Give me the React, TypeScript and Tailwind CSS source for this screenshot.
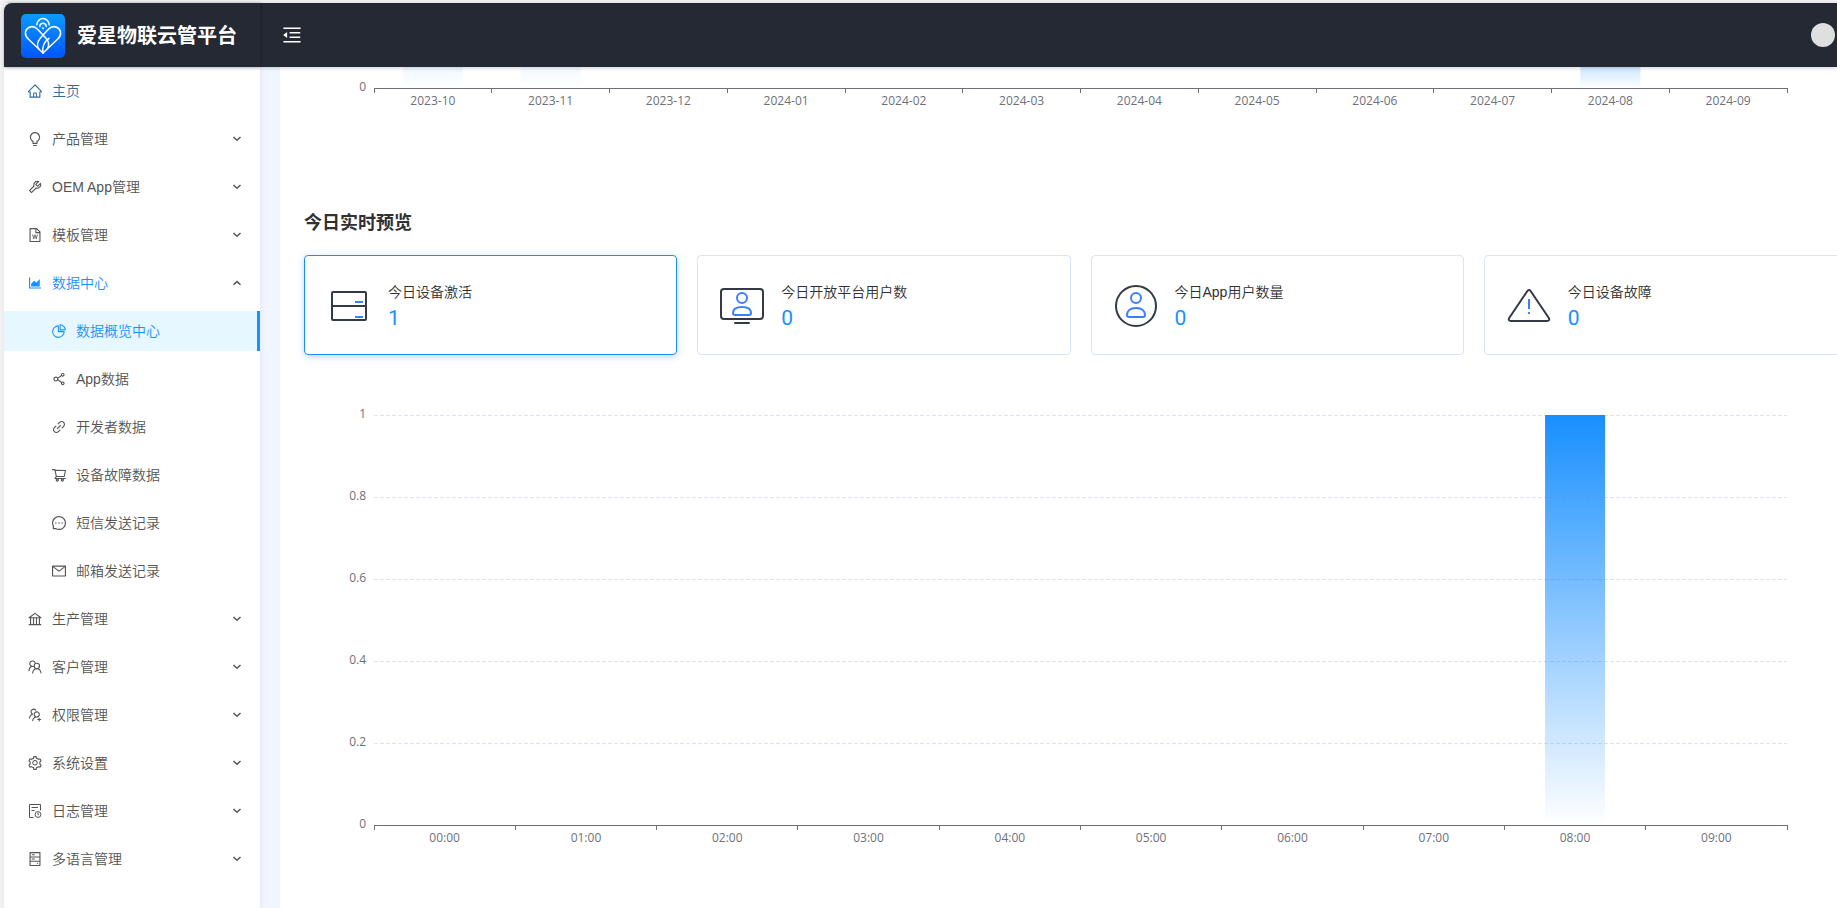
import type { ReactNode } from "react";
import type { IconType } from "react-icons";
import {
  AiOutlineAreaChart,
  AiOutlineBank,
  AiOutlineBulb,
  AiOutlineFileWord,
  AiOutlineHdd,
  AiOutlineHome,
  AiOutlineLink,
  AiOutlineMail,
  AiOutlineMenuFold,
  AiOutlineMessage,
  AiOutlinePieChart,
  AiOutlineSetting,
  AiOutlineShareAlt,
  AiOutlineShoppingCart,
  AiOutlineTool,
  AiOutlineUsergroupAdd,
} from "react-icons/ai";

interface MenuChild {
  label: string;
  icon: IconType;
  selected?: boolean;
}

interface MenuGroup {
  label: string;
  icon: IconType;
  open?: boolean;
  children?: MenuChild[];
}

interface IconProps {
  className?: string;
}

// Log entry: a sheet with a clock badge in its lower right corner.
function LogIcon({ className }: IconProps) {
  return (
    <svg className={className} width="1em" height="1em" viewBox="-1 -1 16 16" fill="none" stroke="currentColor" aria-hidden="true">
      <path d="M5.5 13.5H1.5V0.5h11V6.5M3.5 3.5h6.5M3.5 6.5h3" />
      <circle cx="10" cy="10.5" r="2.9" />
      <path d="M10 8.8v1.9h.9" />
    </svg>
  );
}

// Two people, one half hidden behind the other.
function CustomersIcon({ className }: IconProps) {
  return (
    <svg className={className} width="1em" height="1em" viewBox="-1 -1 16 16" fill="none" stroke="currentColor" strokeWidth="1.1" strokeLinecap="round" aria-hidden="true">
      <circle cx="8.8" cy="6" r="2.7" />
      <path d="M4.6 13c.3-2.500 1.900-4.300 4.200-4.300S12.700 10.500 13 13" />
      <path d="M7 2.600A2.700 2.700 0 1 0 3.900 6.300C2.200 7 1.200 8.600 1 10.800M3.900 6.300c.6.200 1.100.3 1.600.2" />
    </svg>
  );
}

const groups: MenuGroup[] = [
  { label: "产品管理", icon: AiOutlineBulb },
  { label: "OEM App管理", icon: AiOutlineTool },
  { label: "模板管理", icon: AiOutlineFileWord },
  {
    label: "数据中心",
    icon: AiOutlineAreaChart,
    open: true,
    children: [
      { label: "数据概览中心", icon: AiOutlinePieChart, selected: true },
      { label: "App数据", icon: AiOutlineShareAlt },
      { label: "开发者数据", icon: AiOutlineLink },
      { label: "设备故障数据", icon: AiOutlineShoppingCart },
      { label: "短信发送记录", icon: AiOutlineMessage },
      { label: "邮箱发送记录", icon: AiOutlineMail },
    ],
  },
  { label: "生产管理", icon: AiOutlineBank },
  { label: "客户管理", icon: CustomersIcon },
  { label: "权限管理", icon: AiOutlineUsergroupAdd },
  { label: "系统设置", icon: AiOutlineSetting },
  { label: "日志管理", icon: LogIcon },
  { label: "多语言管理", icon: AiOutlineHdd },
];

function Logo() {
  return (
    <svg className="size-11 shrink-0" viewBox="0 0 44 44" fill="none" stroke="#fff" strokeWidth="1.5" strokeLinecap="round" strokeLinejoin="round" aria-hidden="true">
      <defs>
        <linearGradient id="logo-bg" x1="0" y1="0" x2="0" y2="1">
          <stop offset="0" stopColor="#0a9bff" />
          <stop offset="1" stopColor="#0055ff" />
        </linearGradient>
      </defs>
      <rect width="44" height="44" rx="5" fill="url(#logo-bg)" stroke="none" />
      <path d="M15.8 10.800a6.200 6.200 0 0 1 12.400 0" />
      <path d="M18.8 12.400a3.200 3.200 0 1 1 6.400 0" />
      <circle cx="22" cy="14.2" r="0.9" fill="#fff" stroke="none" />
      <path d="M22 39 7 24.800C3 21 3.800 15 8.400 13.200c3-1.200 6-.2 8.200 2l8.400 9c3.600 3.800 3.200 7.200 1.400 10.400" />
      <path d="M22 39l15-14.200c4-3.800 3.200-9.800-1.400-11.600-3-1.200-6-.2-8.200 2l-8 8.800c-3.400 4-3.400 8.600-1.400 11.400" />
      <path d="M22 39c-1.200-6.400.4-10.600 6-14.600" />
    </svg>
  );
}

function Chevron({ up }: { up?: boolean }) {
  return (
    <svg width="10" height="6" viewBox="0 0 10 6" fill="none" stroke="#555" strokeWidth="1.5" aria-hidden="true">
      <path d={up ? "M1.5 4.800 5 1.600 8.500 4.800" : "M1.5 1 5 4.200 8.500 1"} />
    </svg>
  );
}

function Sidebar() {
  return (
    <nav className="relative z-10 w-64 shrink-0 bg-white pt-1 text-sm font-[350] text-[#555] shadow-[1px_0_6px_rgba(0,21,41,0.06)]">
      <ul className="flex flex-col gap-2">
        <li>
          <a href="#home" className="flex h-10 items-center gap-2.5 px-6 text-[#2f6da0]">
            <AiOutlineHome className="-mx-px text-base" />
            主页
          </a>
        </li>
        {groups.map(group => (
          <li key={group.label}>
            <button
              type="button"
              aria-expanded={!!group.open}
              className={
                group.open
                  ? "flex h-10 w-full items-center gap-2.5 pr-[18px] pl-6 text-[#1890ff]"
                  : "flex h-10 w-full items-center gap-2.5 pr-[18px] pl-6"
              }
            >
              <group.icon className="-mx-px text-base" />
              <span className="flex-1 text-left">{group.label}</span>
              <Chevron up={group.open} />
            </button>
            {group.children && (
              <ul className="mt-2 flex flex-col gap-2">
                {group.children.map(child => (
                  <li key={child.label}>
                    <a
                      href="#data"
                      className={
                        child.selected
                          ? "flex h-10 items-center gap-2.5 border-r-3 border-[#1890ff] bg-[#e6f7ff] pl-12 text-[#1890ff]"
                          : "flex h-10 items-center gap-2.5 pl-12"
                      }
                    >
                      <child.icon className="-mx-px text-base" />
                      {child.label}
                    </a>
                  </li>
                ))}
              </ul>
            )}
          </li>
        ))}
      </ul>
    </nav>
  );
}

interface BarChartProps {
  id: string;
  labels: string[];
  bars: { index: number; height: number }[];
  // Height of the area above the x axis.
  height: number;
  yLabels: string[];
}

const BAR_WIDTH = 60;

function BarChart({ id, labels, bars, height, yLabels }: BarChartProps) {
  const step = yLabels.length > 1 ? height / (yLabels.length - 1) : 0;
  const pct = (n: number) => `${(n / labels.length) * 100}%`;

  return (
    <div className="px-[70px]">
      <svg className="block w-full overflow-visible font-['Open_Sans','Noto_Sans',sans-serif] text-xs" height={height + 24} role="img" aria-label={id}>
        <defs>
          <linearGradient id={id} x1="0" y1="0" x2="0" y2="1">
            <stop offset="0" stopColor="#188fff" />
            <stop offset="1" stopColor="#188fff" stopOpacity="0" />
          </linearGradient>
        </defs>
        {yLabels.map((label, i) => {
          const y = height - i * step;
          return (
            <g key={label}>
              {i > 0 && (
                <line x1="0" x2="100%" y1={y} y2={y} stroke="#e0e2ee" strokeDasharray="4 2" shapeRendering="crispEdges" />
              )}
              <text x="-8" y={y + 3} textAnchor="end" fill="#6e7079">
                {label}
              </text>
            </g>
          );
        })}
        {bars.map(bar => (
          <rect
            key={bar.index}
            x={pct(bar.index + 0.5)}
            y={height - bar.height}
            width={BAR_WIDTH}
            height={bar.height}
            transform={`translate(${-BAR_WIDTH / 2} 0)`}
            fill={`url(#${id})`}
          />
        ))}
        <g stroke="#6e7079" shapeRendering="crispEdges">
          <line x1="0" x2="100%" y1={height} y2={height} />
          {Array.from({ length: labels.length + 1 }, (_, i) => (
            <line key={i} x1={pct(i)} x2={pct(i)} y1={height} y2={height + 5} />
          ))}
        </g>
        {labels.map((label, i) => (
          <text key={label} x={pct(i + 0.5)} y={height + 17} textAnchor="middle" fill="#6e7079">
            {label}
          </text>
        ))}
      </svg>
    </div>
  );
}

function CardIcon({ children }: { children: ReactNode }) {
  return (
    <svg className="size-12 shrink-0" viewBox="0 0 48 48" fill="none" stroke="#343a45" strokeWidth="2" strokeLinecap="round" strokeLinejoin="round" aria-hidden="true">
      {children}
    </svg>
  );
}

const cards = [
  {
    label: "今日设备激活",
    value: 1,
    icon: (
      <CardIcon>
        <rect x="7" y="11" width="34" height="28" rx="1" />
        <path d="M7 25h34" />
        <path d="M30 21h8M30 36h8" stroke="#3d7eff" strokeLinecap="butt" />
      </CardIcon>
    ),
  },
  {
    label: "今日开放平台用户数",
    value: 0,
    icon: (
      <CardIcon>
        <rect x="3" y="8" width="42" height="30" rx="3" />
        <path d="M17 42h14" />
        <g stroke="#3d7eff">
          <circle cx="24" cy="17" r="5" />
          <path d="M15 32c0-4 3-6 9-6s9 2 9 6c0 1.500-1 2-2 2H17c-1 0-2-.5-2-2z" />
        </g>
      </CardIcon>
    ),
  },
  {
    label: "今日App用户数量",
    value: 0,
    icon: (
      <CardIcon>
        <circle cx="24" cy="25" r="20" />
        <g stroke="#3d7eff">
          <circle cx="24" cy="17" r="5" />
          <path d="M15 34c0-4 3-7 9-7s9 3 9 7c0 1.500-1 2-2 2H17c-1 0-2-.5-2-2z" />
        </g>
      </CardIcon>
    ),
  },
  {
    label: "今日设备故障",
    value: 0,
    icon: (
      <CardIcon>
        <path d="M22.4 10 4.500 36.500C3 38.800 4 40 6 40h36c2 0 3-1.200 1.500-3.500L25.600 10c-1-1.300-2.200-1.300-3.200 0z" />
        <path d="M24 18v10M24 31v2" stroke="#3d7eff" strokeLinecap="butt" />
      </CardIcon>
    ),
  },
];

const months = [
  "2023-10", "2023-11", "2023-12", "2024-01", "2024-02", "2024-03",
  "2024-04", "2024-05", "2024-06", "2024-07", "2024-08", "2024-09",
];

const hours = ["00:00", "01:00", "02:00", "03:00", "04:00", "05:00", "06:00", "07:00", "08:00", "09:00"];

export default function App() {
  return (
    <div className="flex min-h-screen flex-col overflow-hidden bg-[#f2f2f3] pt-[3px] pl-1 font-['Liberation_Sans','Noto_Sans_CJK_SC',sans-serif]">
      <header className="relative z-20 flex h-16 items-center rounded-tl-lg bg-[#252933] pr-0.5 shadow-[0_1px_4px_rgba(0,21,41,0.2)]">
        <div className="flex h-16 w-64 shrink-0 items-center gap-3 pt-0.5 pl-[17px] shadow-[1px_0_3px_rgba(0,0,0,0.25)]">
          <Logo />
          <h1 className="text-xl font-bold text-white">爱星物联云管平台</h1>
        </div>
        <button type="button" aria-label="收起菜单" className="ml-[21px] text-[22px] text-white">
          <AiOutlineMenuFold />
        </button>
        <button type="button" aria-label="用户" className="ml-auto size-6 rounded-full bg-[#dedfe1]" />
      </header>

      <div className="flex flex-1 bg-[#f1f5ff]">
        <Sidebar />
        <main className="ml-5 min-w-0 flex-1 overflow-hidden bg-white pl-6">
          {/* The report runs a little past the right edge of the window. */}
          <div className="-mr-5">
            <BarChart
              id="month-chart"
              labels={months}
              height={21}
              yLabels={["0"]}
              bars={[
                { index: 0, height: 320 },
                { index: 1, height: 420 },
                { index: 10, height: 97 },
              ]}
            />

            <h2 className="mt-[98px] text-lg leading-[26px] font-bold text-[#303133]">今日实时预览</h2>

            <div className="mt-[19px] grid grid-cols-4 gap-5">
              {cards.map((card, i) => (
                <button
                  key={card.label}
                  type="button"
                  className={
                    i === 0
                      ? "flex h-[100px] items-center gap-[15px] rounded-sm border border-[#1890ff] px-5 text-left shadow-[0_2px_6px_rgba(24,90,200,0.25)]"
                      : "flex h-[100px] items-center gap-[15px] rounded-sm border border-[#d9e4f8] px-5 text-left"
                  }
                >
                  {card.icon}
                  <span className="flex flex-col pt-0.5">
                    <span className="text-sm leading-6 font-[350] text-[#303133]">{card.label}</span>
                    <span className="font-['Roboto',sans-serif] text-[21px] leading-7 text-[#1890ff]">{card.value}</span>
                  </span>
                </button>
              ))}
            </div>

            <div className="mt-[60px]">
              <BarChart
                id="hour-chart"
                labels={hours}
                height={410}
                yLabels={["0", "0.2", "0.4", "0.6", "0.8", "1"]}
                bars={[{ index: 8, height: 410 }]}
              />
            </div>
          </div>
        </main>
      </div>
    </div>
  );
}
